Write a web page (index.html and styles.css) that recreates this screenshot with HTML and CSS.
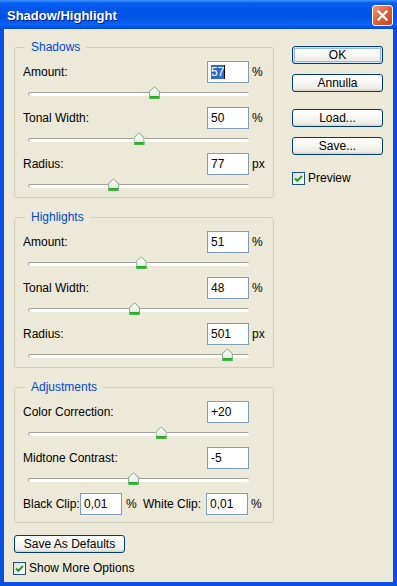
FILE: index.html
```
<!DOCTYPE html>
<html lang="en">
<head>
  <meta charset="UTF-8" />
  <title>Shadow/Highlight</title>
  <link rel="stylesheet" href="styles.css">
</head>
<body>

  <div class="window">
    <!-- Title bar -->
    <div class="titlebar">
      <span class="title">Shadow/Highlight</span>
      <button class="close" aria-label="Close">
        <svg width="11" height="11" viewBox="0 0 11 11"><path d="M1.5 1.5 L9.5 9.5 M9.5 1.5 L1.5 9.5" stroke="#fff" stroke-width="2.2" stroke-linecap="square"/></svg>
      </button>
    </div>

    <div class="client">
      <div class="left">

        <fieldset class="group">
          <legend>Shadows</legend>
          <div class="row"><span class="lbl">Amount:</span><div class="field"><span class="sel">57</span><span class="caret"></span></div><span class="unit">%</span></div>
          <div class="slider"><div class="track"></div><span class="thumb" style="left:57%"></span></div>
          <div class="row"><span class="lbl">Tonal Width:</span><div class="field">50</div><span class="unit">%</span></div>
          <div class="slider"><div class="track"></div><span class="thumb" style="left:50%"></span></div>
          <div class="row"><span class="lbl">Radius:</span><div class="field">77</div><span class="unit">px</span></div>
          <div class="slider"><div class="track"></div><span class="thumb" style="left:38.5%"></span></div>
        </fieldset>

        <fieldset class="group">
          <legend>Highlights</legend>
          <div class="row"><span class="lbl">Amount:</span><div class="field">51</div><span class="unit">%</span></div>
          <div class="slider"><div class="track"></div><span class="thumb" style="left:51%"></span></div>
          <div class="row"><span class="lbl">Tonal Width:</span><div class="field">48</div><span class="unit">%</span></div>
          <div class="slider"><div class="track"></div><span class="thumb" style="left:48%"></span></div>
          <div class="row"><span class="lbl">Radius:</span><div class="field">501</div><span class="unit">px</span></div>
          <div class="slider"><div class="track"></div><span class="thumb" style="left:90%"></span></div>
        </fieldset>

        <fieldset class="group">
          <legend>Adjustments</legend>
          <div class="row"><span class="lbl">Color Correction:</span><div class="field">+20</div><span class="unit"></span></div>
          <div class="slider"><div class="track"></div><span class="thumb" style="left:60%"></span></div>
          <div class="row"><span class="lbl">Midtone Contrast:</span><div class="field">-5</div><span class="unit"></span></div>
          <div class="slider"><div class="track"></div><span class="thumb" style="left:47.5%"></span></div>
          <div class="row clip-row">
            <span class="clip-lbl">Black Clip:</span><div class="field">0,01</div><span class="clip-unit">%</span>
            <span class="clip-lbl wide">White Clip:</span><div class="field">0,01</div><span class="unit">%</span>
          </div>
        </fieldset>

        <button class="btn defaults">Save As Defaults</button>
        <label class="check"><span class="box"><svg width="9" height="9" viewBox="0 0 9 9"><path d="M1 4.5 L3.3 6.8 L8 2" fill="none" stroke="#21a121" stroke-width="2"/></svg></span>Show More Options</label>
      </div>

      <!-- Buttons column -->
      <div class="right">
        <button class="btn default">OK</button>
        <button class="btn">Annulla</button>
        <button class="btn spaced">Load...</button>
        <button class="btn">Save...</button>
        <label class="check preview"><span class="box"><svg width="9" height="9" viewBox="0 0 9 9"><path d="M1 4.5 L3.3 6.8 L8 2" fill="none" stroke="#21a121" stroke-width="2"/></svg></span>Preview</label>
      </div>
    </div>
  </div>

</body>
</html>
```

FILE: styles.css
```
* { box-sizing: border-box; margin:0; padding:0 }
body {
  font-family: 'Liberation Sans', Arial, sans-serif;
  font-size: 12px;
  color: #000;
  background: #0054e3;
  width: 397px;
  height: 586px;
  overflow: hidden;
  white-space: nowrap;
}

.window {
  width: 397px;
  height: 586px;
  display: flex;
  flex-direction: column;
  background: #0a4fe0;
}

.titlebar {
  height: 29px;
  flex-shrink: 0;
  display: flex;
  align-items: center;
  justify-content: space-between;
  padding: 0 4px 0 7px;
  background: linear-gradient(to bottom, #3d95ff 0%, #0a5ff2 10%, #0056ea 30%, #0054e3 60%, #0862f7 85%, #0048d4 100%);
}

.title {
  color: #fff;
  font-weight: bold;
  font-size: 13px;
  text-shadow: 1px 1px 0 #0a1883;
  margin-top: 1px;
}

.close {
  width: 21px;
  height: 21px;
  border: 1px solid #fff;
  border-radius: 3px;
  background: linear-gradient(135deg, #f09b7c 0%, #e0643c 45%, #c8421a 100%);
  display: flex;
  align-items: center;
  justify-content: center;
  margin-top: 2px;
}

.client {
  flex: 1;
  margin: 0 4px 4px 4px;
  background: #ece9d8;
  display: flex;
  padding: 11px 10px 0 10px;
}

.left { width: 260px; }

.group {
  border: 1px solid #d0d0bf;
  border-radius: 3px;
  padding: 7px 0 4px 8px;
  margin-bottom: 12px;
}

.group legend {
  margin-left: 2px;
  padding: 0 6px 0 6px;
  color: #0046d5;
  line-height: 14px;
}

.row {
  height: 22px;
  display: flex;
  align-items: center;
}

.lbl { flex: 1; }

.field {
  width: 42px;
  height: 22px;
  border: 1px solid #7f9db9;
  background: #fff;
  padding-left: 3px;
  line-height: 20px;
  display: flex;
  align-items: center;
}

.sel {
  background: #316ac5;
  color: #fff;
  line-height: 14px;
}

.caret {
  width: 1px;
  height: 14px;
  background: #000;
}

.unit {
  width: 24px;
  padding-left: 3px;
}

.slider {
  position: relative;
  height: 18px;
  width: 221px;
  margin: 0 0 6px 5px;
}

.slider:last-child { margin-bottom: 0; }

.track {
  position: absolute;
  left: 0; right: 0;
  top: 9px;
  height: 4px;
  background: #fff;
  border-top: 1px solid #a4a39e;
  border-left: 1px solid #a4a39e;
  border-radius: 2px;
}

.thumb {
  position: absolute;
  top: 3px;
  width: 11px;
  height: 13px;
  margin-left: -5px;
  background:
    linear-gradient(to bottom, transparent 10px, #21a121 10px, #45c045 13px),
    linear-gradient(to bottom, #fff, #e3e3dc);
  clip-path: polygon(50% 0, 100% 40%, 100% 100%, 0 100%, 0 40%);
}

.thumb::before {
  content: '';
  position: absolute;
  inset: 0;
  background: #7fb07f;
  clip-path: polygon(50% 0, 100% 40%, 100% 100%, 91% 100%, 91% 44%, 50% 9%, 9% 44%, 9% 100%, 0 100%, 0 40%);
}

.clip-row { margin-bottom: 3px; }
.clip-lbl { width: 57px; }
.clip-lbl.wide { width: 63px; }
.clip-unit { width: 21px; padding-left: 4px; }

.btn {
  font-family: inherit;
  font-size: 12px;
  color: #000;
  height: 18px;
  border: 1px solid #003c74;
  border-radius: 3px;
  background: linear-gradient(to bottom, #ffffff 0%, #f6f6f2 50%, #ecebe4 85%, #d6d0c5 100%);
  display: flex;
  align-items: center;
  justify-content: center;
}

.btn.default {
  box-shadow: inset 0 0 0 1px #cee7ff, inset 0 0 0 2px #98b8ea;
}

.defaults {
  width: 111px;
  margin-top: 11px;
}

.check {
  display: flex;
  align-items: center;
  gap: 3px;
}

.check .box {
  width: 13px;
  height: 13px;
  border: 1px solid #1c5180;
  background: linear-gradient(135deg, #dcdcd7, #fff);
  display: flex;
  align-items: center;
  justify-content: center;
}

.left .check { margin-top: 8px; margin-left: -1px; }

.right {
  width: 91px;
  margin-left: 18px;
  padding-top: 6px;
  display: flex;
  flex-direction: column;
  gap: 10px;
}

.right .btn { width: 91px; }
.right .spaced { margin-top: 7px; }
.preview { margin-top: 6px; }
```
